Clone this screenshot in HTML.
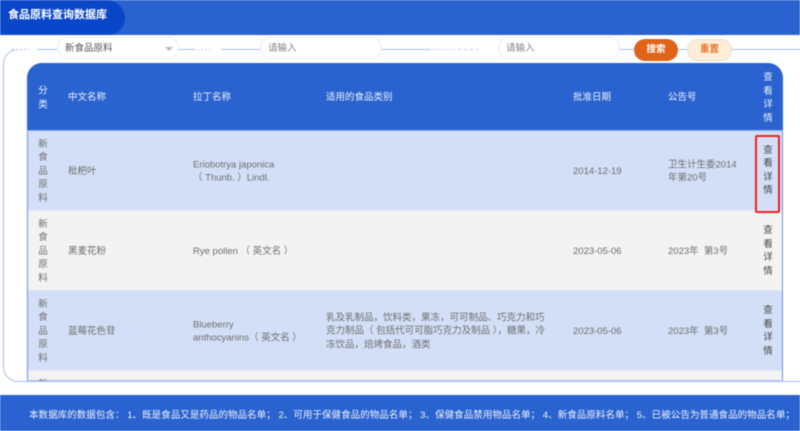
<!DOCTYPE html>
<html lang="zh">
<head>
<meta charset="utf-8">
<style>
html,body{margin:0;padding:0;width:800px;height:431px;overflow:hidden;background:#fff}
body{position:relative;font-family:"Liberation Sans","Noto Sans CJK SC",sans-serif;font-size:9.5px;line-height:13.6px;color:#6e6e6e}
div{position:absolute;box-sizing:border-box}
#wrap{left:0;top:0;width:800px;height:431px;overflow:hidden;filter:blur(.4px)}
.v{transform:translateY(calc(-50% + 1px))}
.c{width:16px;text-align:center}
.h{color:#eef3ff}
.d{color:#444}
.pill{height:22px;top:37px;background:#fff;border:1px solid #ececf0;border-radius:11px;padding-left:7px;line-height:21px;color:#808080}
</style>
</head>
<body>
<div id="wrap">
  <!-- header -->
  <div style="left:0;top:0;width:800px;height:35px;background:#2a63cf"></div>
  <div style="left:0;top:0;width:125px;height:35px;background:#0a47c8;border-radius:0 20px 18px 0"></div>
  <div style="left:8px;top:7px;font-size:11px;font-weight:bold;line-height:17px;color:#fff;white-space:nowrap">食品原料查询数据库</div>

  <!-- frame -->
  <div style="left:3px;top:49px;width:820px;height:333px;border:1px solid #a9bdec;border-radius:15px"></div>
  <div style="left:10px;top:49px;width:19px;height:1px;background:repeating-linear-gradient(90deg,#fff 0 2px,#a9bdec 2px 4px)"></div>
  <div style="left:29px;top:48px;width:8px;height:3px;background:#fff"></div>
  <div style="left:195px;top:48px;width:26px;height:3px;background:#fff"></div>
  <div style="left:195px;top:49px;width:18px;height:1px;background:repeating-linear-gradient(90deg,#fff 0 2px,#ccd7f4 2px 4px)"></div>
  <div style="left:430px;top:48px;width:68px;height:3px;background:#fff"></div>
  <div style="left:430px;top:49px;width:46px;height:1px;background:#dbe3f7"></div>
  <div style="left:455px;top:49px;width:23px;height:1px;background:repeating-linear-gradient(90deg,#fff 0 3px,#b9c9f0 3px 6px)"></div>

  <!-- filters -->
  <div class="pill" style="left:57px;width:122px;color:#555">新食品原料</div>
  <div style="left:165px;top:47px;width:0;height:0;border-left:4px solid transparent;border-right:4px solid transparent;border-top:4px solid #bbb"></div>
  <div class="pill" style="left:260px;width:122px">请输入</div>
  <div class="pill" style="left:498px;width:122px">请输入</div>
  <div style="left:634px;top:39px;width:44px;height:22px;background:#e0631a;border-radius:11px;color:#fff;text-align:center;line-height:22px;font-weight:bold">搜索</div>
  <div style="left:687px;top:39px;width:45px;height:22px;background:#fdeed8;border:1px solid #e6dccb;border-radius:11px;color:#e8732e;text-align:center;line-height:20px;font-weight:bold">重置</div>

  <!-- table -->
  <div style="left:27px;top:63px;width:756px;height:318px;overflow:hidden;border-radius:15px 15px 0 0;background:#f3f3f3;border-left:1px solid #6f94e0;border-right:1px solid #6f94e0;border-bottom:1px solid #b3c6ee">
  </div>
  <div style="left:27px;top:63px;width:756px;height:67px;background:#2a63cf;border-radius:15px 15px 0 0"></div>
  <div style="left:27px;top:130px;width:756px;height:1px;background:#8aaaea"></div>
  <div style="left:28px;top:131px;width:754px;height:79px;background:#d2dff6"></div>
  <div style="left:28px;top:210px;width:754px;height:1px;background:#e6ebf5"></div>
  <div style="left:28px;top:291px;width:754px;height:79px;background:#d2dff6"></div>
  <div style="left:28px;top:290px;width:754px;height:1px;background:#dfe6f4"></div>
  <div style="left:28px;top:370px;width:754px;height:1px;background:#e6ebf5"></div>

  <!-- header text -->
  <div class="h v c" style="left:35px;top:97px">分<br>类</div>
  <div class="h v" style="left:68px;top:96.5px">中文名称</div>
  <div class="h v" style="left:193px;top:96.5px">拉丁名称</div>
  <div class="h v" style="left:326px;top:96.5px">适用的食品类别</div>
  <div class="h v" style="left:573px;top:96.5px">批准日期</div>
  <div class="h v" style="left:668px;top:96.5px">公告号</div>
  <div class="h v c" style="left:760px;top:97px">查<br>看<br>详<br>情</div>

  <!-- row 1 -->
  <div class="v c" style="left:35px;top:170.5px">新<br>食<br>品<br>原<br>料</div>
  <div class="v" style="left:68px;top:170.5px">枇杷叶</div>
  <div class="v" style="left:193px;top:170.5px;width:120px">Eriobotrya japonica<br>（ Thunb. ）Lindl.</div>
  <div class="v" style="left:573px;top:170.5px">2014-12-19</div>
  <div class="v" style="left:668px;top:170.5px;width:76px">卫生计生委2014<br>年第20号</div>
  <div class="v c d" style="left:760px;top:169.5px">查<br>看<br>详<br>情</div>
  <div style="left:755px;top:135px;width:25px;height:78px;border:2px solid #f02020;border-radius:2px"></div>

  <!-- row 2 -->
  <div class="v c" style="left:35px;top:250.5px">新<br>食<br>品<br>原<br>料</div>
  <div class="v" style="left:68px;top:250.5px">黑麦花粉</div>
  <div class="v" style="left:193px;top:250.5px;white-space:nowrap">Rye pollen （ 英文名 ）</div>
  <div class="v" style="left:573px;top:250.5px">2023-05-06</div>
  <div class="v" style="left:668px;top:250.5px;white-space:nowrap">2023年&nbsp; 第3号</div>
  <div class="v c d" style="left:760px;top:250px">查<br>看<br>详<br>情</div>

  <!-- row 3 -->
  <div class="v c" style="left:35px;top:330.5px">新<br>食<br>品<br>原<br>料</div>
  <div class="v" style="left:68px;top:330.5px">蓝莓花色苷</div>
  <div class="v" style="left:193px;top:330.5px;white-space:nowrap">Blueberry<br>anthocyanins（ 英文名 ）</div>
  <div class="v" style="left:326px;top:330.5px;white-space:nowrap">乳及乳制品，饮料类，果冻，可可制品、巧克力和巧<br>克力制品（ 包括代可可脂巧克力及制品 ），糖果，冷<br>冻饮品，焙烤食品，酒类</div>
  <div class="v" style="left:573px;top:330.5px">2023-05-06</div>
  <div class="v" style="left:668px;top:330.5px;white-space:nowrap">2023年&nbsp; 第3号</div>
  <div class="v c d" style="left:760px;top:330px">查<br>看<br>详<br>情</div>

  <!-- row 4 partial -->
  <div style="left:35px;top:378px;width:16px;height:3px;overflow:hidden;text-align:center">新</div>

  <!-- footer -->
  <div style="left:0;top:395px;width:800px;height:36px;background:#2a63cf"></div>
  <div style="left:29px;top:409px;color:#eef3ff;white-space:nowrap;font-size:9.5px;letter-spacing:.05px">本数据库的数据包含： 1、既是食品又是药品的物品名单； 2、可用于保健食品的物品名单； 3、保健食品禁用物品名单； 4、新食品原料名单； 5、已被公告为普通食品的物品名单；</div>
</div>
</body>
</html>
